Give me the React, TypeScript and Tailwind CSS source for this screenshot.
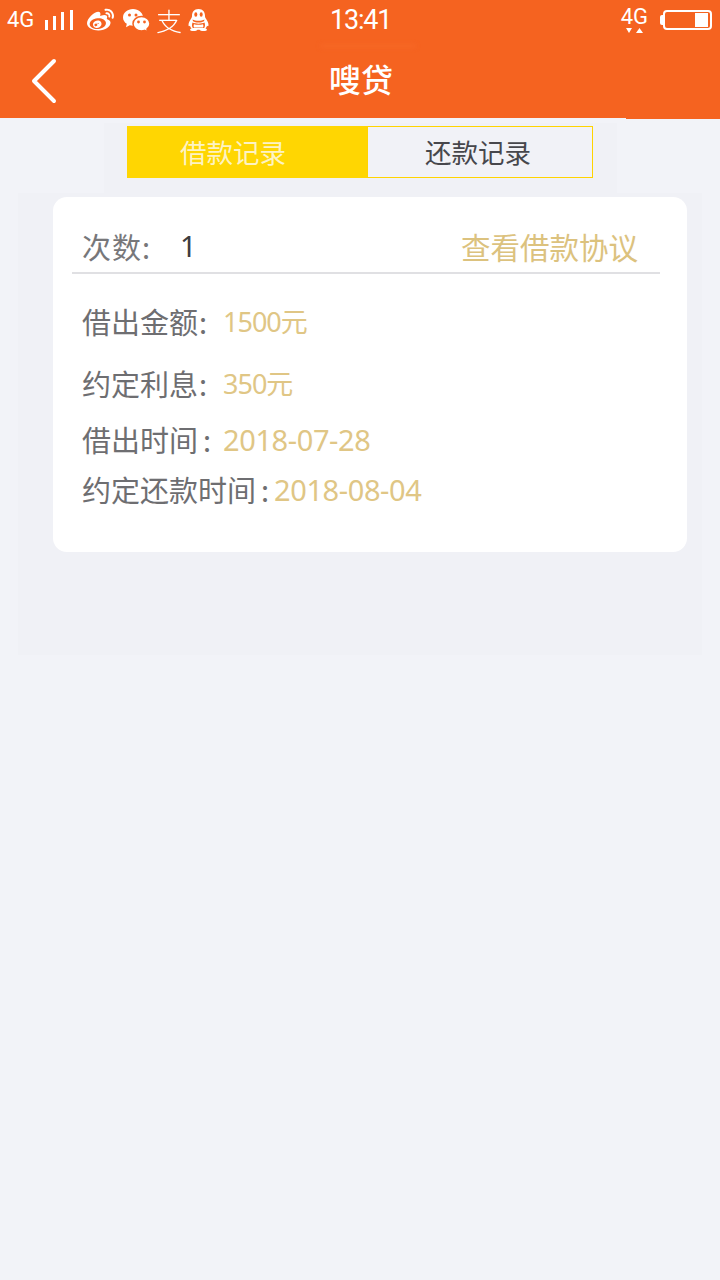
import { FaWeibo } from "react-icons/fa";

const cjk = "font-['Noto_Sans_CJK_SC','Noto_Sans',sans-serif]";
const orange = "#f56320";

const rows = [
  { label: "借出金额", colon: "ml-[1px]", value: "1500元", labelWidth: "w-[141px]", size: "text-[27px] tracking-[-1px]", height: "h-[62px]" },
  { label: "约定利息", colon: "ml-[1px]", value: "350元", labelWidth: "w-[141px]", size: "text-[27px] tracking-[-1px]", height: "h-[62px]" },
  { label: "借出时间", colon: "ml-[5px]", value: "2018-07-28", labelWidth: "w-[141px]", size: "text-[29px] tracking-[-0.4px]", height: "h-[50px]" },
  { label: "约定还款时间", colon: "ml-[5px]", value: "2018-08-04", labelWidth: "w-[192px]", size: "text-[29px] tracking-[-0.4px]", height: "h-[50px]" },
];

function WechatIcon() {
  return (
    <svg width="27" height="23" viewBox="0 0 27 23" className="ml-[9px]">
      <path d="M10 0C15.5 0 20 3.700 20 8.400C20 13.100 15.500 16.800 10 16.800C8.800 16.800 7.700 16.600 6.700 16.300L3 18.300L3.800 14.800C1.500 13.300 0 11 0 8.400C0 3.700 4.500 0 10 0Z" fill="white" />
      <circle cx="6.500" cy="6" r="1.500" fill={orange} />
      <circle cx="13" cy="6" r="1.500" fill={orange} />
      <path d="M18.500 7.500C23.200 7.500 27 10.700 27 14.700C27 16.900 25.800 18.800 24 20.100L24.600 23L21.600 21.400C20.700 21.700 19.600 21.900 18.500 21.900C13.800 21.900 10 18.700 10 14.700C10 10.700 13.800 7.500 18.500 7.500Z" fill="white" stroke={orange} strokeWidth="1.500" />
      <circle cx="15.500" cy="13" r="1.400" fill={orange} />
      <circle cx="21.500" cy="13" r="1.400" fill={orange} />
    </svg>
  );
}

function QqIcon() {
  return (
    <svg width="21" height="22" viewBox="0 0 21 22" className="ml-[7px]">
      <path d="M10.500 0C15 0 17 3.200 17 7C17 8 17.200 8.600 18 9.800C19.200 11.600 20.500 13.800 20.500 16C20.500 17.200 20 17.600 19 16.800C18.800 18 18.200 18.800 17.500 19.400C18.600 19.800 19 20.300 19 20.800C19 21.600 17.500 22 15.500 22C13.500 22 12 21.600 11.500 20.800H9.500C9 21.600 7.500 22 5.500 22C3.500 22 2 21.600 2 20.800C2 20.300 2.400 19.800 3.500 19.400C2.800 18.800 2.200 18 2 16.800C1 17.600 0.500 17.200 0.500 16C0.500 13.800 1.800 11.600 3 9.800C3.800 8.600 4 8 4 7C4 3.200 6 0 10.500 0Z" fill="white" />
      <ellipse cx="7.800" cy="5.500" rx="1.500" ry="2.200" fill={orange} />
      <ellipse cx="13.200" cy="5.500" rx="1.500" ry="2.200" fill={orange} />
      <path d="M4.500 10.500C7.500 12.300 13.500 12.300 16.500 10.500L16 12.300C13 14 8 14 5 12.300Z" fill={orange} />
      <path d="M4.500 13.500C3.800 15.500 3.800 17.500 4.800 19H16.200C17.200 17.500 17.200 15.500 16.500 13.500C13.500 15 7.500 15 4.500 13.500Z" fill={orange} />
      <path d="M6 15.200C8.500 16 12.500 16 15 15.200C15.500 16.500 15.500 17.500 15 18.400H6C5.500 17.500 5.500 16.500 6 15.200Z" fill="white" />
    </svg>
  );
}

function StatusBar() {
  return (
    <div className="relative flex h-[40px] items-center pl-[7px] pr-[8px] text-white">
      <span className="w-[37px] font-['Roboto',sans-serif] text-[22px] leading-none">4G</span>
      <svg width="28" height="20" viewBox="0 0 28 20" fill="white" className="ml-[1px]">
        <rect x="0" y="10" width="3" height="10" />
        <rect x="8" y="6" width="3" height="14" />
        <rect x="16" y="2" width="3" height="18" />
        <rect x="25" y="0" width="3" height="20" />
      </svg>
      <FaWeibo className="ml-[14px] text-[27px]" />
      <WechatIcon />
      <span className={`${cjk} ml-[6px] origin-left scale-x-[1.04] text-[25px] font-light leading-none`}>支</span>
      <QqIcon />
      <span className="absolute left-[330px] top-[3px] font-['Roboto',sans-serif] text-[27px] leading-[34px] tracking-[-1.2px]">13:41</span>
      <div className="ml-auto flex items-center">
        <div className="flex flex-col items-center">
          <span className="font-['Roboto',sans-serif] text-[22px] leading-[20px]">4G</span>
          <svg width="18" height="7" viewBox="0 0 18 7" fill="white">
            <polygon points="1,1 7,1 4,6" />
            <polygon points="11,6 18,6 14.500,1" />
          </svg>
        </div>
        <div className="ml-[12px] flex items-center">
          <div className="h-[10px] w-[3px] rounded-l-[2px] bg-white" />
          <div className="flex h-[20px] w-[49px] items-center justify-end rounded-[4px] border-2 border-white pr-[2px]">
            <div className="h-[14px] w-[13px] bg-white" />
          </div>
        </div>
      </div>
    </div>
  );
}

export default function App() {
  return (
    <div className={`${cjk} relative min-h-[1280px] bg-[#f2f3f8]`}>
      <header className="relative h-[118px] bg-[#f56320]">
        <StatusBar />
        <div className="absolute left-[320px] top-[44px] h-[4px] w-[96px] rounded-full bg-[#f96c2a]/50 blur-[2px]" />
        <div className="relative flex h-[78px] items-center justify-center pb-[2px] pl-[2px]">
          <svg width="28" height="46" viewBox="0 0 28 46" fill="none" className="absolute left-[30px] top-[18px]">
            <path d="M24 3 L4 23 L24 43" stroke="white" strokeWidth="4" strokeLinecap="round" strokeLinejoin="round" />
          </svg>
          <span className="text-[32px] font-medium leading-none text-white">嗖贷</span>
        </div>
        <div className="absolute right-0 top-[118px] h-[1px] w-[94px] bg-[#f56320]" />
      </header>

      <div className="mx-auto mt-[5px] flex h-[70px] w-[513px] justify-center bg-[#f0f1f6] pt-[3px]">
        <div className="flex h-[52px] w-[466px]">
          <div className="flex w-[240px] items-center justify-center bg-[#ffd602] pr-[28px] text-[26.500px] leading-none text-[#fdf3c4]">
            借款记录
          </div>
          <div className="flex flex-1 items-center justify-center border border-[#ffd400] bg-[#f1f2f7] pr-[4px] text-[26.500px] leading-none text-[#47474c]">
            还款记录
          </div>
        </div>
      </div>

      <div className="mx-[18px] h-[462px] bg-[#f0f1f6] pl-[35px] pr-[15px] pt-[4px]">
        <div className="h-[355px] rounded-[14px] bg-white pl-[19px] pr-[27px]">
          <div className="flex h-[77px] items-end justify-between border-b-2 border-[#e0e0e3] pb-[6px] pl-[10px] pr-[22px]">
            <div className="flex items-center text-[29px] leading-[40px]">
              <span className="w-[98px] tracking-[1px] text-[#77777a]">次数:</span>
              <span className="font-['Noto_Sans',sans-serif] text-[#3c3c40]">1</span>
            </div>
            <span className="text-[29.500px] leading-[40px] text-[#dcc27e]">查看借款协议</span>
          </div>
          <div className="flex flex-col pl-[10px] pt-[16px]">
            {rows.map((row) => (
              <div key={row.label} className={`flex items-center ${row.height}`}>
                <span className={`${row.labelWidth} whitespace-nowrap text-[29px] leading-none text-[#6e6e71]`}>
                  {row.label}
                  <span className={row.colon}>:</span>
                </span>
                <span className={`${row.size} whitespace-nowrap font-['Noto_Sans','Noto_Sans_CJK_SC',sans-serif] leading-none text-[#e0c685]`}>{row.value}</span>
              </div>
            ))}
          </div>
        </div>
      </div>
    </div>
  );
}
